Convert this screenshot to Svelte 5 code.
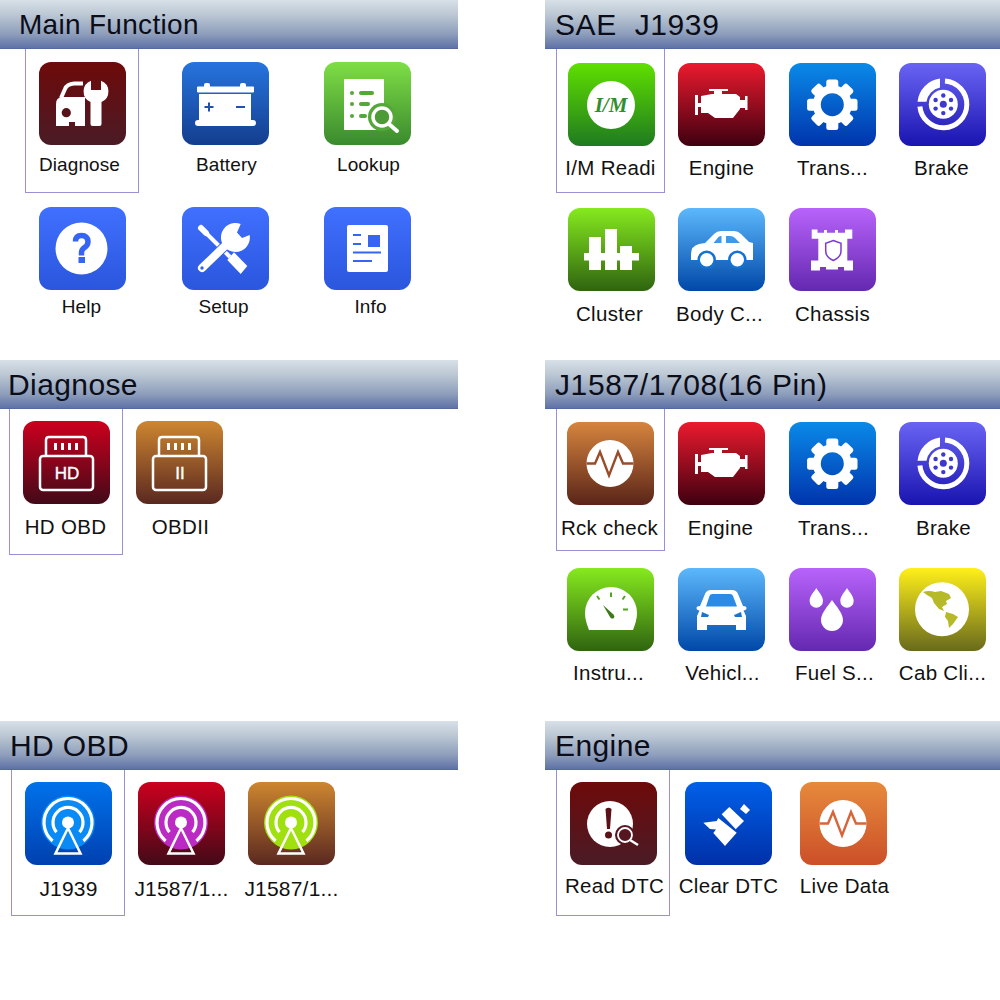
<script>
  const panels = [
    { title: 'Main Function', cls: 'p-main', pad: '13px 0 0 39px', cols: '143px 142px 87px', rows: '145px 83px', head: 19, hsize: 28, hls: 0.3, size: 19, ls: 0.1, sel: [25, 114, 144],
      items: [
        ['Diagnose','diag','g-maroon',-3,8],['Battery','battery','g-navy',1,8],['Lookup','lookup','g-leaf',1,8],
        ['Help','help','g-royal',-1,5],['Setup','setup','g-royal',-2,5],['Info','info','g-royal',3,5]] },
    { title: 'SAE  J1939', cls: 'p-sae', pad: '14px 0 0 23px', cols: '110px 111px 110px 87px', rows: '145px 83px', head: 10, hsize: 30, hls: 0.6, size: 20.5, ls: 0.3, sel: [11, 109, 144],
      items: [
        ['I/M Readi','im','g-im',-1,10],['Engine','engine','g-red',0,10],['Trans...','gear','g-blue',0,10],['Brake','brake','g-indigo',-1,10],
        ['Cluster','cluster','g-lime',-2,11],['Body C...','car','g-sky',-2,11],['Chassis','chassis','g-purple',0,11]] },
    { title: 'Diagnose', cls: 'p-diag', pad: '12px 0 0 23px', cols: '113px 87px', rows: '84px', head: 8, hsize: 30, hls: 0.4, size: 20.5, ls: 0.3, sel: [9, 114, 146],
      items: [['HD OBD','obdhd','g-crimson',-1,11],['OBDII','obd2','g-copper',1,11]] },
    { title: 'J1587/1708(16 Pin)', cls: 'p-j', pad: '13px 0 0 22px', cols: '111px 111px 110px 87px', rows: '146px 83px', head: 10, hsize: 30, hls: 0.6, size: 20.5, ls: 0.3, sel: [11, 109, 142],
      items: [
        ['Rck check','pulse-a','g-rust',-1,11],['Engine','engine','g-red',-1,11],['Trans...','gear','g-blue',1,11],['Brake','brake','g-indigo',1,11],
        ['Instru...','gauge','g-lime',-2,10],['Vehicl...','front','g-sky',1,10],['Fuel S...','drops','g-purple',2,10],['Cab Cli...','globe','g-yellow',0,10]] },
    { title: 'HD OBD', cls: 'p-hd', pad: '12px 0 0 25px', cols: '113px 110px 87px', rows: '84px', head: 10, hsize: 30, hls: 0.4, size: 21, ls: 0.2, sel: [11, 114, 146],
      items: [['J1939','ant-a','g-azure',0,12],['J1587/1...','ant-b','g-crimson',0,12],['J1587/1...','ant-c','g-copper',0,12]] },
    { title: 'Engine', cls: 'p-eng', pad: '12px 0 0 25px', cols: '115px 115px 87px', rows: '84px', head: 10, hsize: 30, hls: 0.4, size: 20.5, ls: 0.3, sel: [11, 114, 146],
      items: [['Read DTC','dtc','g-maroon',1,9],['Clear DTC','brush','g-cobalt',0,9],['Live Data','pulse-b','g-orange',1,9]] }
  ];
</script>

{#snippet antenna(color)}
  <circle cx="43" cy="40.5" r="27" fill={color} />
  <g class="line w3">
    <path d="M27.6 58.9A24 24 0 1 1 58.4 58.9" />
    <path d="M31.5 50.1A15 15 0 1 1 54.5 50.1" />
  </g>
  <circle cx="43" cy="40.5" r="6" class="w" />
  <path d="M43 46L30.5 71.5H55.5Z" class="line w2" />
{/snippet}

{#snippet obd(text)}
  <g class="line w2">
    <path d="M23 35V19q0-3 3-3h34q3 0 3 3V35" />
    <rect x="17" y="35" width="53" height="34" rx="3" />
  </g>
  <g class="w">
    <rect x="31" y="22" width="3" height="7" /><rect x="38" y="22" width="3" height="7" />
    <rect x="45" y="22" width="3" height="7" /><rect x="52" y="22" width="3" height="7" />
  </g>
  <text x="44" y="58" class="obdtxt">{text}</text>
{/snippet}

{#snippet pulse(color)}
  <circle cx="43" cy="41.5" r="23.5" class="w" />
  <path d="M19.5 41.5H28L33 30L42 53.5L51 30L56 41.5H66.5" fill="none" stroke={color} stroke-width="2.4" />
{/snippet}

{#snippet icon(name)}
  {#if name === 'diag'}
    <path d="M22 36l4-9q2-5 9-5.500h9" class="line w4" />
    <path d="M17 42q0-7 7-7h22v29H36v-4H30v4H17Z" class="w" />
    <circle cx="27.3" cy="50.7" r="4.6" fill="#581319" />
    <path d="M52 18.700A11.500 11.500 0 0 0 51.500 40V62q0 2 2 2h7q2 0 2-2V40A11.500 11.500 0 0 0 62 18.700V28H52Z" class="w" />
  {:else if name === 'battery'}
    <g class="w">
      <rect x="22" y="21" width="6" height="6" rx="2" /><rect x="58" y="21" width="6" height="6" rx="2" />
      <rect x="15" y="24.500" width="57" height="6" rx="1" />
      <rect x="17" y="32" width="52" height="28" />
      <rect x="13" y="58" width="61" height="6" rx="3" />
    </g>
    <path d="M22.500 45h9M27 40.500v9M54 45h9" fill="none" stroke="#1e52ad" stroke-width="2" />
  {:else if name === 'lookup'}
    <rect x="20" y="17" width="40" height="51" class="w" />
    <g fill="#55a73a">
      <circle cx="28" cy="31" r="2" /><circle cx="28" cy="42" r="2" /><circle cx="28" cy="54" r="2" />
      <rect x="35" y="29" width="15" height="4" rx="2" /><rect x="35" y="40" width="11" height="4" rx="2" /><rect x="35" y="52" width="8" height="4" rx="2" />
      <circle cx="58" cy="55" r="14" />
    </g>
    <circle cx="58" cy="55" r="9" fill="#4c9b36" stroke="#fff" stroke-width="3.500" />
    <path d="M65 62l8 7" class="line w4" stroke-linecap="round" />
  {:else if name === 'help'}
    <circle cx="42.500" cy="41.500" r="26" class="w" />
    <path d="M36.500 34.500q0-6 6-6t6.500 6q0 4-3.500 6q-3 2-3 5v3" fill="none" stroke="#3565f2" stroke-width="5.500" />
    <rect x="39.500" y="50" width="6.500" height="6" fill="#3565f2" />
  {:else if name === 'setup'}
    <path d="M19 21L24 26" fill="none" stroke="#fff" stroke-width="6" stroke-linecap="round" />
    <path d="M23 25L48 50" class="line w4" />
    <path d="M45.300 53L52 45.300L65.300 59L58.700 67Z" class="w" />
    <path d="M20 61L46 36" fill="none" stroke="#3462ea" stroke-width="10" />
    <path d="M20 61L46 36" fill="none" stroke="#fff" stroke-width="8" stroke-linecap="round" />
    <circle cx="20" cy="61" r="1.700" fill="#3462ea" />
    <path d="M58.700 17A14.500 14.500 0 1 0 67.700 28L60 31L55 25.500Z" class="w" />
  {:else if name === 'info'}
    <rect x="23" y="18" width="41" height="47" rx="2" class="w" />
    <path d="M29 28h8M29 37h8M29 45.500h28M29 54h19" fill="none" stroke="#3565f2" stroke-width="2" />
    <rect x="44" y="28" width="12" height="12" fill="#3565f2" />
  {:else if name === 'im'}
    <circle cx="43" cy="42" r="24" class="w" />
    <text x="43" y="49" class="imtxt">I/M</text>
  {:else if name === 'engine'}
    <g class="w">
      <rect x="17" y="32" width="3" height="20" />
      <rect x="20" y="40" width="5" height="4" />
      <rect x="67" y="33" width="2.500" height="14" />
      <rect x="61" y="37" width="7" height="8" />
      <path d="M23 33L34 31H36V28H31V26H50V28H44V31H58L62 34V46L55 55H37L30 50H23Z" />
    </g>
  {:else if name === 'gear'}
    <circle cx="43.300" cy="41.700" r="15.500" fill="none" stroke="#fff" stroke-width="8" />
    <g class="w">
      {#each [0,45,90,135,180,225,270,315] as a}
        <rect x="37.300" y="16.500" width="12" height="9" rx="2.500" transform="rotate({a} 43.300 41.700)" />
      {/each}
    </g>
  {:else if name === 'brake'}
    <path d="M46 17.900A23.500 23.500 0 1 1 20.900 43.500" fill="none" stroke="#fff" stroke-width="5" />
    <path d="M41 15.500A26 26 0 0 0 18.500 38.700H27.500A17 17 0 0 1 41 24.600Z" class="w" />
    <circle cx="44.300" cy="41.300" r="14.500" class="w" />
    <g fill="#3f38d0">
      <circle cx="44.300" cy="41.300" r="3.500" />
      <circle cx="44.300" cy="32.500" r="2.200" /><circle cx="44.300" cy="50.100" r="2.200" />
      <circle cx="52" cy="37" r="2.200" /><circle cx="52" cy="45.600" r="2.200" />
      <circle cx="36.600" cy="37" r="2.200" /><circle cx="36.600" cy="45.600" r="2.200" />
    </g>
  {:else if name === 'cluster'}
    <g class="w">
      <rect x="21" y="29" width="12" height="33" /><rect x="37" y="21" width="12" height="41" />
      <rect x="52" y="38" width="12" height="24" /><rect x="16" y="45" width="55" height="7.500" />
    </g>
  {:else if name === 'car'}
    <path d="M13 46q0-8 8-10l6-1l9-9q3-3 7-3h13q4 0 7 3l8 8l4 1V52H13Z" class="w" />
    <path d="M35.500 35l5-6q1-1 3-1v7ZM48 28h4q3 0 5 2l5 5H48Z" fill="#3f98e8" />
    <g class="w" stroke="#1372d2" stroke-width="2.500">
      <circle cx="28.700" cy="51.700" r="8" /><circle cx="59.300" cy="51.700" r="8" />
    </g>
  {:else if name === 'chassis'}
    <path d="M22.700 21.500H28.500V24.800H35V22H38V24.800H46V22H49V24.800H56V21.500H63.300V30.800H58.300V52.500H64V62.500H55V59H49V61.500H37V59H31V62.500H22V52.500H29.300V30.800H22.700Z" class="w" />
    <path d="M44.300 32.500L52 35.300V43q0 6-7.700 9.500Q36.700 49 36.700 43V35.300Z" fill="none" stroke="#7d3ad0" stroke-width="1.500" />
  {:else if name === 'obdhd'}
    {@render obd('HD')}
  {:else if name === 'obd2'}
    {@render obd('II')}
  {:else if name === 'pulse-a'}
    {@render pulse('#9a4c28')}
  {:else if name === 'pulse-b'}
    {@render pulse('#d8643a')}
  {:else if name === 'gauge'}
    <path d="M22 62Q18 52 18 45A26 26 0 0 1 70 45Q70 52 66 62Z" class="w" />
    <path d="M44 24.500v4.500M30 28l2.500 3.500M58 28l-2.500 3.500M56 41.500h5" fill="none" stroke="#54a41e" stroke-width="2" />
    <path d="M36 37L46.500 46.500Q48.500 49.500 46 50.500Q44 51 43 49Z" fill="#3f7a18" />
  {:else if name === 'front'}
    <path d="M22 38L27 26q1.500-4 6-4H54q4.500 0 6 4L65 38q3.500 0 3.500 2t-3 2.500L68 48V62H58V57H29V62H19V48L21.500 42.500q-3-.5-3-2.500t3.500-2Z" class="w" />
    <path d="M28 38.500L31.500 28q.5-2 3-2H52q2.500 0 3 2L59 38.500Z" fill="#2a8ae4" />
    <path d="M24 44l7 3l-1 2h-7ZM63 44l-7 3l1 2h7Z" fill="#1b74cf" />
  {:else if name === 'drops'}
    <g class="w">
      <path d="M27.300 20C30 24.500 34 28 34 33A6.700 6.700 0 0 1 20.600 33C20.600 28 24.600 24.500 27.300 20Z" />
      <path d="M58 20C60.700 24.500 64.700 28 64.700 33A6.700 6.700 0 0 1 51.300 33C51.300 28 55.300 24.500 58 20Z" />
      <path d="M43 32C47 38 54 45 54 52A11 11 0 0 1 32 52C32 45 39 38 43 32Z" />
    </g>
  {:else if name === 'globe'}
    <circle cx="43" cy="41.300" r="27" class="w" />
    <g fill="#b7ba28">
      <path d="M24 24Q30 22 36 24L42 23L50 26L52 30L47 33L48 36L43 39L45 43L40 41L35 35L33 30L28 27Z" />
      <path d="M47 44L54 46L59 49L54 56L50 60L49 53L46 49Z" />
    </g>
  {:else if name === 'ant-a'}
    {@render antenna('#0a8af5')}
  {:else if name === 'ant-b'}
    {@render antenna('#bb2bc4')}
  {:else if name === 'ant-c'}
    {@render antenna('#9fe00e')}
  {:else if name === 'dtc'}
    <circle cx="40" cy="42" r="23" class="w" />
    <path d="M35.500 27q3-2.500 6 0L40 47h-3Z" fill="#5a1219" />
    <circle cx="38.500" cy="53" r="3.500" fill="#5a1219" />
    <circle cx="55" cy="53" r="10" fill="#561620" />
    <circle cx="55" cy="53" r="7" fill="#561620" stroke="#fff" stroke-width="1.800" />
    <path d="M60 58l8 5" class="line w2" />
  {:else if name === 'brush'}
    <g class="w">
      <path d="M55 27L59 22L65 28L61 32Z" />
      <path d="M36.700 32.300L44.300 25L59 39L50.700 47.300Z" />
      <path d="M18.300 40.700L31.700 39L33.300 36L51.700 50.700L40 64L28.300 51L31 47.500L25 47Z" />
    </g>
  {/if}
{/snippet}

<div class="page">
  {#each panels as p}
    <section class="panel {p.cls}">
      <h2 style="padding-left:{p.head}px;font-size:{p.hsize}px;letter-spacing:{p.hls}px">{p.title}</h2>
      <div class="body" style="padding:{p.pad};grid-template-columns:{p.cols};grid-template-rows:{p.rows}">
        <div class="sel" style="left:{p.sel[0]}px;width:{p.sel[1]}px;height:{p.sel[2]}px"></div>
        {#each p.items as [label, ic, grad, dx, dy]}
          <div class="item">
            <div class="tile {grad}">
              <svg viewBox="0 0 87 83" width="87" height="83">{@render icon(ic)}</svg>
            </div>
            <div class="label" style="font-size:{p.size}px;letter-spacing:{p.ls}px;transform:translate({dx}px,{dy}px)">{label}</div>
          </div>
        {/each}
      </div>
    </section>
  {/each}
</div>

<style>
  :global(body) { margin: 0; background: #fff; }
  .page {
    width: 1000px; height: 1000px; display: grid;
    grid-template-columns: 458px 87px 455px;
    grid-template-rows: 360px 361px 279px;
    font-family: "Liberation Sans", Arial, sans-serif;
    overflow: hidden;
  }
  .panel { min-width: 0; }
  .p-main, .p-diag, .p-hd { grid-column: 1; }
  .p-sae, .p-j, .p-eng { grid-column: 3; }
  h2 {
    margin: 0; height: 49px; box-sizing: border-box;
    font-weight: 400; line-height: 49px; color: #0b0d18;
    white-space: pre;
    background: linear-gradient(#d8e0e8, #bcc8d4 30%, #8f9fbc 70%, #5f72a6);
    border-bottom: 1px solid #56699f;
  }
  .body { position: relative; display: grid; justify-content: start; align-content: start; }
  .sel {
    position: absolute; top: 0; box-sizing: border-box;
    border: 1.500px solid #9a90d4; border-top-width: 0;
  }
  .item { display: flex; flex-direction: column; align-items: center; width: 87px; }
  .tile { width: 87px; height: 83px; border-radius: 12px; flex: none; }
  svg { display: block; }
  .label { line-height: 24px; color: #111; white-space: pre; }
  :global(.w) { fill: #fff; }
  :global(.line) { fill: none; stroke: #fff; }
  :global(.w2) { stroke-width: 2.500; }
  :global(.w3) { stroke-width: 3.200; }
  :global(.w4) { stroke-width: 4; }
  :global(.obdtxt) { font: 400 17px "Liberation Sans", sans-serif; fill: #fff; stroke: #fff; stroke-width: .4px; text-anchor: middle; }
  :global(.imtxt) { font: italic 700 21px "Liberation Serif", serif; fill: #2f8f2c; text-anchor: middle; }
  .g-maroon { background: linear-gradient(#6e0a0a, #4a1b26); }
  .g-navy { background: linear-gradient(#2674de, #143e8e); }
  .g-leaf { background: linear-gradient(#7fde45, #3a8a2e); }
  .g-royal { background: linear-gradient(#4070ff, #2b56dd); }
  .g-im { background: linear-gradient(#5fe000, #1f7a1f); }
  .g-red { background: linear-gradient(#ec1a2e, #3e0010); }
  .g-blue { background: linear-gradient(#0a8ae8, #0034ac); }
  .g-indigo { background: linear-gradient(#6a64f4, #1a14b0); }
  .g-lime { background: linear-gradient(#86ea1e, #2f6410); }
  .g-sky { background: linear-gradient(#5cb8fc, #0048a8); }
  .g-purple { background: linear-gradient(#b863fb, #6428b0); }
  .g-rust { background: linear-gradient(#d6853e, #5a2418); }
  .g-crimson { background: linear-gradient(#cc001e, #420a18); }
  .g-copper { background: linear-gradient(#cd8630, #5a2820); }
  .g-azure { background: linear-gradient(#0072ea, #0040b0); }
  .g-yellow { background: linear-gradient(#fff01a, #686a1c); }
  .g-cobalt { background: linear-gradient(#0060e8, #0030a8); }
  .g-orange { background: linear-gradient(#e68a3c, #cc4f28); }
</style>
